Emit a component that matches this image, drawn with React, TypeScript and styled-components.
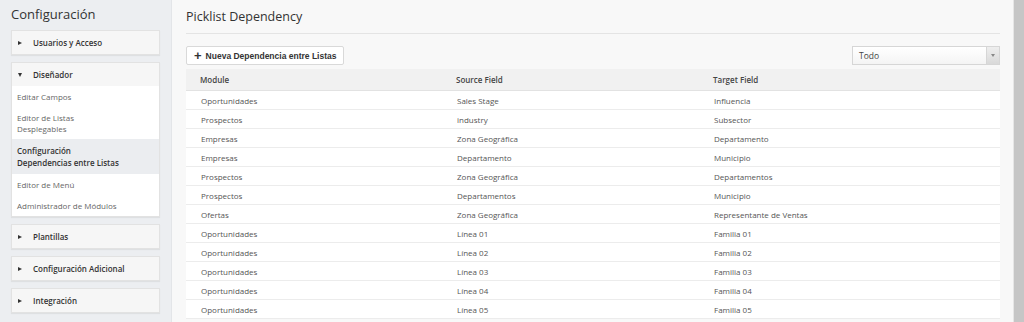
import React from "react";
import styled, { createGlobalStyle } from "styled-components";

const GlobalStyle = createGlobalStyle`
  html, body {
    margin: 0;
    padding: 0;
    background: #f7f7f7;
    font-family: "Open Sans", "Liberation Sans", sans-serif;
    color: #444;
  }
`;

const Page = styled.div`
  display: flex;
  width: 1024px;
  height: 322px;
  overflow: hidden;
`;

const Sidebar = styled.aside`
  width: 172px;
  flex-shrink: 0;
  background: #eceef1;
  border-right: 1px solid #e3e5e8;
  padding: 0 11px;
  box-sizing: border-box;
`;

const SideTitle = styled.h1`
  margin: 0;
  padding: 5px 0 0 0;
  height: 30px;
  box-sizing: border-box;
  font-size: 13px;
  line-height: 18px;
  font-weight: 400;
  color: #333;
`;

const Panel = styled.div`
  background: #fff;
  border: 1px solid #e2e2e2;
  box-shadow: 0 1px 1px rgba(0, 0, 0, 0.06);
  margin-bottom: 7px;
`;

const PanelHeader = styled.div`
  display: flex;
  align-items: center;
  height: 23px;
  padding-left: 6px;
  background: #f6f6f6;
  font-size: 8px;
  font-weight: 600;
  color: #333;
`;

const Caret = styled.span<{ $open?: boolean }>`
  display: inline-block;
  width: 0;
  height: 0;
  margin-right: 11px;
  ${(p) =>
    p.$open
      ? `border-left: 2.5px solid transparent; border-right: 2.5px solid transparent; border-top: 4px solid #333;`
      : `border-top: 2.5px solid transparent; border-bottom: 2.5px solid transparent; border-left: 4px solid #333;`}
`;

const NavList = styled.div`
  display: flex;
  flex-direction: column;
`;

const NavItem = styled.div<{ $active?: boolean }>`
  padding: ${(p) => (p.$active ? "6px 5px 5px" : "5px 5px")};
  font-size: 8px;
  line-height: ${(p) => (p.$active ? "12px" : "11px")};
  color: ${(p) => (p.$active ? "#333" : "#666")};
  font-weight: ${(p) => (p.$active ? 600 : 400)};
  background: ${(p) => (p.$active ? "#ebedf0" : "#fff")};
`;

const Main = styled.main`
  flex: 1;
  padding: 0 13px 0 14px;
  background: #f8f8f8;
`;

const PageTitle = styled.h2`
  margin: 0;
  padding: 8px 0 0;
  height: 34px;
  box-sizing: border-box;
  font-size: 12.5px;
  line-height: 18px;
  font-weight: 400;
  color: #333;
  border-bottom: 1px solid #e4e4e4;
`;

const Toolbar = styled.div`
  display: flex;
  justify-content: space-between;
  align-items: center;
  padding: 12px 0 4px;
`;

const Button = styled.button`
  display: flex;
  align-items: center;
  gap: 4px;
  height: 19px;
  padding: 0 7px;
  background: #fff;
  border: 1px solid #d9d9d9;
  border-radius: 2px;
  font-family: "Liberation Sans", Arial, sans-serif;
  font-size: 8.5px;
  font-weight: 700;
  color: #333;
`;

const Plus = styled.span`
  font-size: 13px;
  line-height: 1;
  font-weight: 700;
  margin-top: -1px;
`;

const Select = styled.div`
  display: flex;
  width: 148px;
  height: 19px;
  background: linear-gradient(#fff, #f4f4f4);
  border: 1px solid #d6d6d6;
  box-sizing: border-box;
  font-size: 8.5px;
  color: #444;
`;

const SelectText = styled.span`
  flex: 1;
  display: flex;
  align-items: center;
  padding-left: 6px;
`;

const SelectArrow = styled.span`
  width: 12px;
  display: flex;
  align-items: center;
  justify-content: center;
  border-left: 1px solid #d6d6d6;
  background: linear-gradient(#eee, #d9d9d9);
  &::after {
    content: "";
    border-left: 2px solid transparent;
    border-right: 2px solid transparent;
    border-top: 3px solid #888;
  }
`;

const Table = styled.div`
  display: flex;
  flex-direction: column;
  background: #fff;
`;

const Row = styled.div<{ $head?: boolean }>`
  display: grid;
  grid-template-columns: 256px 257px 1fr;
  height: ${(p) => (p.$head ? "21px" : "18px")};
  align-items: center;
  padding-left: ${(p) => (p.$head ? "14px" : "15px")};
  border-bottom: 1px solid ${(p) => (p.$head ? "#e2e2e2" : "#ececec")};
  background: ${(p) => (p.$head ? "#f1f1f1" : "#fff")};
  font-size: 8px;
  font-weight: ${(p) => (p.$head ? 600 : 400)};
  color: ${(p) => (p.$head ? "#444" : "#555")};
`;

const ScrollBar = styled.div`
  width: 10px;
  flex-shrink: 0;
  border-left: 1px solid #e6e6e6;
  background: #c6c6c6;
`;

const rows: [string, string, string][] = [
  ["Oportunidades", "Sales Stage", "Influencia"],
  ["Prospectos", "industry", "Subsector"],
  ["Empresas", "Zona Geográfica", "Departamento"],
  ["Empresas", "Departamento", "Municipio"],
  ["Prospectos", "Zona Geográfica", "Departamentos"],
  ["Prospectos", "Departamentos", "Municipio"],
  ["Ofertas", "Zona Geográfica", "Representante de Ventas"],
  ["Oportunidades", "Línea 01", "Familia 01"],
  ["Oportunidades", "Línea 02", "Familia 02"],
  ["Oportunidades", "Línea 03", "Familia 03"],
  ["Oportunidades", "Línea 04", "Familia 04"],
  ["Oportunidades", "Línea 05", "Familia 05"],
];

export default function App() {
  return (
    <>
      <GlobalStyle />
      <Page>
        <Sidebar>
          <SideTitle>Configuración</SideTitle>
          <Panel>
            <PanelHeader>
              <Caret />
              Usuarios y Acceso
            </PanelHeader>
          </Panel>
          <Panel>
            <PanelHeader>
              <Caret $open />
              Diseñador
            </PanelHeader>
            <NavList>
              <NavItem>Editar Campos</NavItem>
              <NavItem>
                Editor de Listas
                <br />
                Desplegables
              </NavItem>
              <NavItem $active>
                Configuración
                <br />
                Dependencias entre Listas
              </NavItem>
              <NavItem>Editor de Menú</NavItem>
              <NavItem>Administrador de Módulos</NavItem>
            </NavList>
          </Panel>
          <Panel>
            <PanelHeader>
              <Caret />
              Plantillas
            </PanelHeader>
          </Panel>
          <Panel>
            <PanelHeader>
              <Caret />
              Configuración Adicional
            </PanelHeader>
          </Panel>
          <Panel>
            <PanelHeader>
              <Caret />
              Integración
            </PanelHeader>
          </Panel>
        </Sidebar>
        <Main>
          <PageTitle>Picklist Dependency</PageTitle>
          <Toolbar>
            <Button>
              <Plus>+</Plus>
              Nueva Dependencia entre Listas
            </Button>
            <Select>
              <SelectText>Todo</SelectText>
              <SelectArrow />
            </Select>
          </Toolbar>
          <Table>
            <Row $head>
              <span>Module</span>
              <span>Source Field</span>
              <span>Target Field</span>
            </Row>
            {rows.map((r, i) => (
              <Row key={i}>
                <span>{r[0]}</span>
                <span>{r[1]}</span>
                <span>{r[2]}</span>
              </Row>
            ))}
          </Table>
        </Main>
        <ScrollBar />
      </Page>
    </>
  );
}
